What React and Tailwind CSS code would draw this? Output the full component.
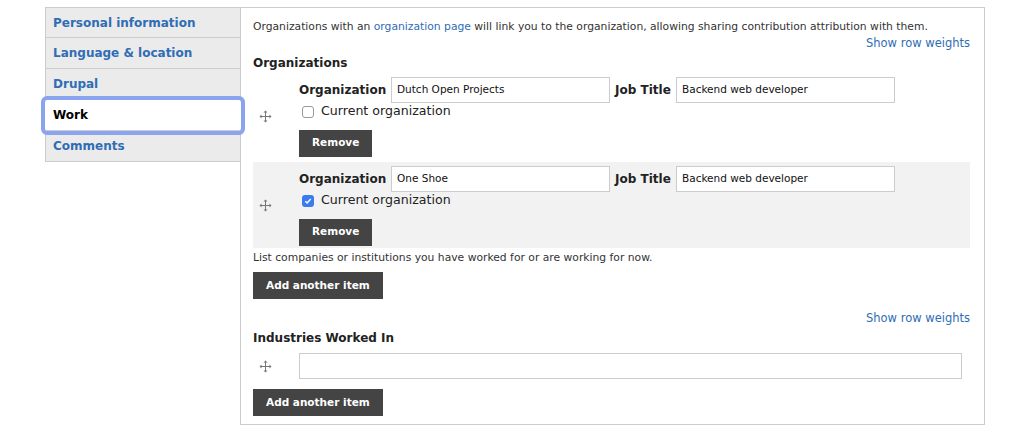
import React from 'react';

const tabs = ['Personal information', 'Language & location', 'Drupal', 'Work', 'Comments'];

function DragIcon() {
    return (
        <svg width="13" height="13" viewBox="0 0 13 13" className="text-[#777]">
            <path d="M6.5 1v11M1 6.5h11" stroke="currentColor" strokeWidth="1" fill="none" />
            <path d="M6.5 0.5l-2 2h4z M6.5 12.5l-2-2h4z M0.5 6.5l2-2v4z M12.5 6.5l-2-2v4z" fill="currentColor" />
        </svg>
    );
}

function Checkbox({ checked }) {
    if (checked) {
        return (
            <span className="w-[12px] h-[12px] rounded-[3px] bg-[#3a7bf0] flex items-center justify-center">
                <svg width="8" height="8" viewBox="0 0 8 8">
                    <path d="M1.3 4.2l1.8 1.8 3.6-4" stroke="white" strokeWidth="1.4" fill="none" />
                </svg>
            </span>
        );
    }
    return <span className="w-[12px] h-[12px] rounded-[3px] border border-[#9a9a9a] bg-white" />;
}

function Button({ children }) {
    return (
        <button className="h-[27px] px-[13px] bg-[#444] text-white font-bold text-[10.5px]">
            {children}
        </button>
    );
}

function TextInput({ value, className }) {
    return (
        <div className={`h-[26px] border border-[#ccc] bg-white flex items-center px-[5px] text-[10.5px] text-[#111] ${className}`}>
            {value}
        </div>
    );
}

function OrgRow({ org, job, current, shaded }) {
    return (
        <div className={`flex items-center h-[86px] ${shaded ? 'bg-[#f2f2f2]' : ''}`}>
            <div className="w-[46px] pl-[6px] flex items-center">
                <DragIcon />
            </div>
            <div className="flex flex-col pt-[1px]">
                <div className="flex items-center h-[26px]">
                    <span className="font-bold text-[12px] text-[#222] w-[92px]">Organization</span>
                    <TextInput value={org} className="w-[219px]" />
                    <span className="font-bold text-[12px] text-[#222] ml-[5px] w-[61px]">Job Title</span>
                    <TextInput value={job} className="w-[219px]" />
                </div>
                <div className="flex items-center h-[18px] pl-[3px] gap-[7px]">
                    <Checkbox checked={current} />
                    <span className="text-[12.6px] text-[#222]">Current organization</span>
                </div>
                <div className="mt-[9px] flex">
                    <Button>Remove</Button>
                </div>
            </div>
        </div>
    );
}

export default function App() {
    return (
        <div className="w-[1020px] h-[434px] bg-white pt-[7px] pl-[45px] flex" style={{ fontFamily: '"DejaVu Sans", sans-serif' }}>
            <ul className="w-[195px] flex flex-col">
                {tabs.map((t, i) => (
                    <li
                        key={t}
                        className={
                            t === 'Work'
                                ? 'relative z-10 h-[31px] -mr-[1px] bg-white flex items-center pl-[8px] font-bold text-[12px] text-black rounded-[2px] outline-[4px] outline-solid outline-[#8aa4ef] border-b border-[#ccc]'
                                : `h-[31px] bg-[#ebebeb] border-l border-b border-[#ccc] flex items-center pl-[7px] font-bold text-[12px] text-[#2f6db5] ${i === 0 ? 'border-t' : ''}`
                        }
                    >
                        {t}
                    </li>
                ))}
            </ul>
            <div className="w-[745px] h-[418px] border border-[#ccc] pl-[12px] pr-[14px] pt-[11px]">
                <p className="text-[10.75px] text-[#333] leading-[16px]">
                    Organizations with an <span className="text-[#2f6db5]">organization page</span> will link you to the organization, allowing sharing contribution attribution with them.
                </p>
                <div className="flex justify-end leading-[16px] mt-[0px]">
                    <span className="text-[11.5px] text-[#2f6db5]">Show row weights</span>
                </div>
                <h3 className="font-bold text-[12px] text-[#222] leading-[16px] mt-[4px] mb-[2px]">Organizations</h3>
                <OrgRow org="Dutch Open Projects" job="Backend web developer" current={false} />
                <div className="h-[3px]" />
                <OrgRow org="One Shoe" job="Backend web developer" current shaded />
                <p className="text-[10.75px] text-[#333] leading-[14px] mt-[3px]">
                    List companies or institutions you have worked for or are working for now.
                </p>
                <div className="mt-[7px] flex">
                    <Button>Add another item</Button>
                </div>
                <div className="flex justify-end leading-[14px] mt-[12px]">
                    <span className="text-[11.5px] text-[#2f6db5]">Show row weights</span>
                </div>
                <h3 className="font-bold text-[12px] text-[#222] leading-[16px] mt-[5px]">Industries Worked In</h3>
                <div className="flex items-center mt-[7px]">
                    <div className="w-[46px] pl-[6px] flex items-center">
                        <DragIcon />
                    </div>
                    <TextInput value="" className="w-[663px]" />
                </div>
                <div className="mt-[10px] flex">
                    <Button>Add another item</Button>
                </div>
            </div>
        </div>
    );
}
